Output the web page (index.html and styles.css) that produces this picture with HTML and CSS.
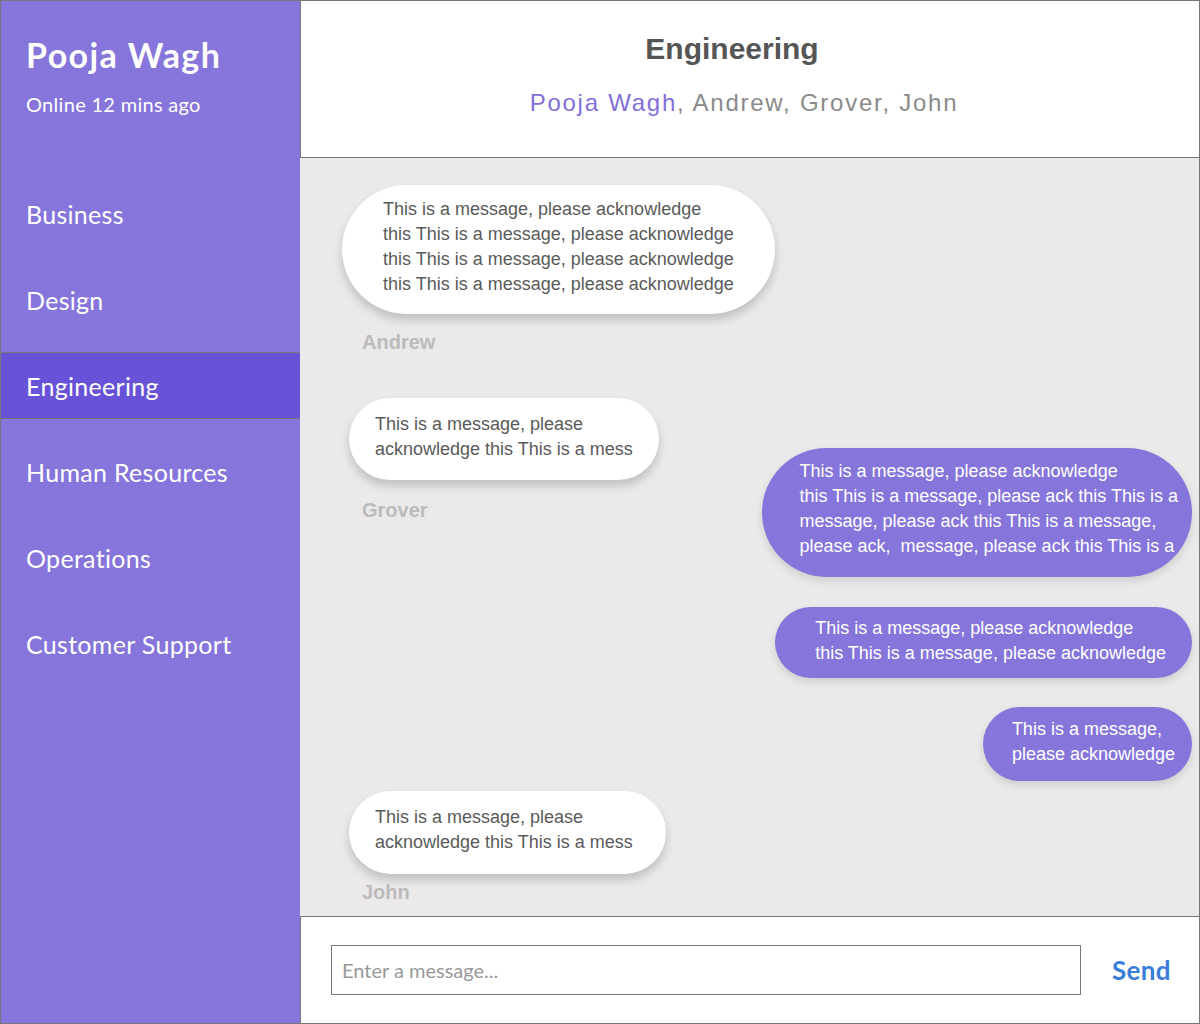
FILE: index.html
```html
<!DOCTYPE html>
<html lang="en">
<head>
<meta charset="utf-8">
<title>Chat - Engineering</title>
<link rel="stylesheet" href="styles.css">
</head>
<body>
<div class="app">
  <aside class="sidebar">
    <div class="profile">
      <h1 class="profile-name">Pooja Wagh</h1>
      <p class="profile-status">Online 12 mins ago</p>
    </div>
    <nav class="channels">
      <a class="channel">Business</a>
      <a class="channel">Design</a>
      <a class="channel active">Engineering</a>
      <a class="channel">Human Resources</a>
      <a class="channel">Operations</a>
      <a class="channel">Customer Support</a>
    </nav>
  </aside>
  <main class="chat">
    <header class="chat-header">
      <h2 class="chat-title">Engineering</h2>
      <p class="members"><span class="me">Pooja Wagh</span>, Andrew, Grover, John</p>
    </header>
    <section class="messages">
      <div class="msg-in msg-andrew">
        <div class="bubble bubble-in b-andrew">This is a message, please acknowledge<br>this This is a message, please acknowledge<br>this This is a message, please acknowledge<br>this This is a message, please acknowledge</div>
        <div class="sender">Andrew</div>
      </div>
      <div class="msg-row">
        <div class="msg-in">
          <div class="bubble bubble-in b-grover">This is a message, please<br>acknowledge this This is a mess</div>
          <div class="sender sender-grover">Grover</div>
        </div>
        <div class="out-stack">
          <div class="bubble bubble-out b-out1">This is a message, please acknowledge<br>this This is a message, please ack this This is a<br>message, please ack this This is a message,<br>please ack,&nbsp; message, please ack this This is a</div>
          <div class="bubble bubble-out b-out2">This is a message, please acknowledge<br>this This is a message, please acknowledge</div>
          <div class="bubble bubble-out b-out3">This is a message,<br>please acknowledge</div>
        </div>
      </div>
      <div class="msg-in msg-john">
        <div class="bubble bubble-in b-john">This is a message, please<br>acknowledge this This is a mess</div>
        <div class="sender sender-john">John</div>
      </div>
    </section>
    <footer class="composer">
      <input class="composer-input" type="text" placeholder="Enter a message...">
      <button class="send-btn" type="button">Send</button>
    </footer>
  </main>
</div>
</body>
</html>
```

FILE: styles.css
```css
* { box-sizing: border-box; }
html, body { margin: 0; padding: 0; }
body {
  width: 1200px;
  height: 1024px;
  overflow: hidden;
  background: #ffffff;
  font-family: "Liberation Sans", Arial, sans-serif;
}
.app {
  display: flex;
  width: 1200px;
  height: 1024px;
}

/* Sidebar */
.sidebar {
  width: 300px;
  flex: 0 0 300px;
  background: #8675da;
  border: 1px solid #777;
  border-right: none;
  color: #fff;
  font-family: "Lato", "Open Sans", sans-serif;
  display: flex;
  flex-direction: column;
}
.profile {
  padding: 33px 25px 0;
}
.profile-name {
  margin: 0;
  font-size: 34px;
  line-height: 42px;
  font-weight: 700;
  letter-spacing: 1.4px;
}
.profile-status {
  margin: 16px 0 0;
  font-size: 20px;
  line-height: 24px;
  font-weight: 400;
  letter-spacing: 0.3px;
}
.channels {
  margin-top: 64px;
  display: flex;
  flex-direction: column;
  gap: 19px;
}
.channel {
  display: flex;
  align-items: center;
  height: 67px;
  padding: 0 25px;
  font-size: 25px;
  letter-spacing: 0.3px;
  border-top: 1px solid transparent;
  border-bottom: 1px solid transparent;
  color: #fff;
}
.channel.active {
  background: #6853d8;
  border-color: #777;
}

/* Main chat */
.chat {
  flex: 1;
  display: flex;
  flex-direction: column;
  min-width: 0;
}
.chat-header {
  height: 158px;
  flex: 0 0 158px;
  border: 1px solid #777;
  background: #fff;
  text-align: center;
  padding-top: 30px;
}
.chat-title {
  margin: 0;
  padding-right: 36px;
  font-size: 30px;
  line-height: 36px;
  font-weight: 700;
  color: #555;
}
.members {
  margin: 21px 0 0;
  padding-right: 12px;
  font-size: 24px;
  line-height: 30px;
  letter-spacing: 1.75px;
  color: #8a8a8a;
}
.members .me { color: #8270d8; }

.messages {
  flex: 1;
  background: #ebe9ea;
  border-right: 1px solid #777;
  padding: 27px 7px 0 42px;
  display: flex;
  flex-direction: column;
  overflow: hidden;
}
.bubble {
  font-size: 18px;
  line-height: 25px;
  white-space: nowrap;
  border-radius: 999px;
}
.bubble-in {
  background: #fff;
  color: #5a5a5a;
  box-shadow: 0 6px 10px rgba(0, 0, 0, 0.18);
}
.bubble-out {
  background: #8675da;
  color: #fff;
  box-shadow: 0 4px 8px rgba(0, 0, 0, 0.12);
}
.msg-in {
  display: flex;
  flex-direction: column;
  align-items: flex-start;
}
.sender {
  margin: 18px 0 0 20px;
  font-size: 20px;
  line-height: 20px;
  font-weight: 700;
  color: #bbbbbb;
}
.sender-grover { margin-top: 20px; margin-left: 20px; }
.sender-john { margin-top: 8px; }

.b-andrew { padding: 12px 41px 17px; }
.b-grover { margin-left: 7px; padding: 14px 26px 18px; }
.b-john { margin-left: 7px; padding: 14px 33px 19px 26px; }

.msg-row {
  margin-top: 46px;
  display: flex;
  justify-content: space-between;
  align-items: flex-start;
}
.out-stack {
  padding-top: 50px;
  display: flex;
  flex-direction: column;
  align-items: flex-end;
}
.b-out1 { padding: 11px 14px 18px 37px; }
.b-out2 { margin-top: 30px; padding: 9px 26px 12px 40px; }
.b-out3 { margin-top: 29px; padding: 10px 17px 14px 29px; }

.msg-john { margin-top: 10px; }

/* Composer */
.composer {
  height: 108px;
  flex: 0 0 108px;
  border: 1px solid #777;
  background: #fff;
  display: flex;
  align-items: flex-start;
  padding: 28px 0 0 30px;
}
.composer-input {
  width: 750px;
  height: 50px;
  border: 1px solid #777;
  padding: 0 10px;
  font-family: "Lato", "Open Sans", sans-serif;
  font-size: 20px;
  color: #555;
  outline: none;
}
.composer-input::placeholder { color: #999; }
.send-btn {
  margin-left: 31px;
  height: 50px;
  padding: 0;
  border: none;
  background: none;
  color: #3b7dd8;
  font-family: "Lato", "Open Sans", sans-serif;
  font-size: 26px;
  font-weight: 700;
  letter-spacing: 0.3px;
  cursor: pointer;
}
```
